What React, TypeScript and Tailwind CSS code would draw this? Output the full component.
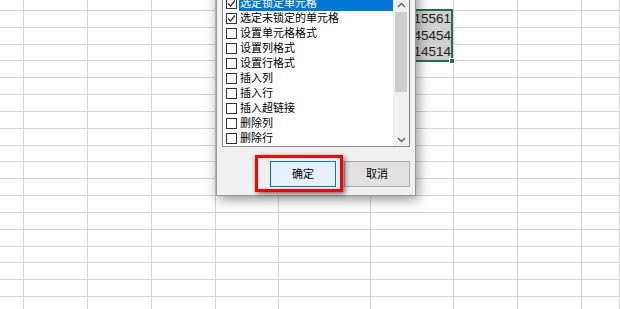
import React from 'react';

const colWidths = [24, 64, 64, 64, 63, 92, 83, 64, 64, 38];
const rowHeights = [11, 17, 17, 16, 17, 17, 17, 17, 17, 16, 17, 17, 17, 17, 17, 16, 17, 17, 13];
const values: Record<number, string> = { 1: '15561', 2: '45454', 3: '14514' };

const items = [
  { label: '选定锁定单元格', checked: true, active: true },
  { label: '选定未锁定的单元格', checked: true },
  { label: '设置单元格格式' },
  { label: '设置列格式' },
  { label: '设置行格式' },
  { label: '插入列' },
  { label: '插入行' },
  { label: '插入超链接' },
  { label: '删除列' },
  { label: '删除行' },
];

function Sheet() {
  return (
    <div className="flex flex-col">
      {rowHeights.map((h, r) => (
        <div key={r} className="flex" style={{ height: h }}>
          {colWidths.map((w, c) => {
            const selected = c === 6 && values[r];
            return (
              <div
                key={c}
                className={`border-r border-b border-[#d4d4d4] flex items-center justify-end pr-[2px] text-[13.5px] text-[#222] ${selected ? 'bg-[#cfcfcf]' : 'bg-white'}`}
                style={{ width: w }}
              >
                {selected ? values[r] : null}
              </div>
            );
          })}
        </div>
      ))}
    </div>
  );
}

function Check({ checked }: { checked?: boolean }) {
  return (
    <div className="w-[11px] h-[11px] border border-[#333] bg-white shrink-0 flex items-center justify-center">
      {checked && (
        <svg width="9" height="9" viewBox="0 0 9 9">
          <path d="M1 4.5 L3.5 7 L8 1.5" fill="none" stroke="#333" strokeWidth="1.2" />
        </svg>
      )}
    </div>
  );
}

function ListBox() {
  return (
    <div className="w-[188px] h-[152px] border border-[#828790] bg-white flex">
      <div className="flex-1 flex flex-col">
        {items.map((it, i) => (
          <div key={i} className="h-[15px] flex items-center pl-[3px]">
            <Check checked={it.checked} />
            <div
              className={`ml-[2px] h-full flex-1 flex items-center pl-[1px] text-[11px] leading-none ${it.active ? 'bg-[#0078d7] text-white' : 'text-black'}`}
            >
              {it.label}
            </div>
          </div>
        ))}
      </div>
      <div className="w-[16px] bg-[#f0f0f0] flex flex-col items-center">
        <svg width="9" height="6" viewBox="0 0 9 6" className="mt-[6px]">
          <path d="M1 5 L4.5 1.5 L8 5" fill="none" stroke="#606060" strokeWidth="1.4" />
        </svg>
        <div className="mt-[4px] w-[12px] h-[80px] bg-[#cdcdcd]" />
        <div className="flex-1" />
        <svg width="9" height="6" viewBox="0 0 9 6" className="mb-[3px]">
          <path d="M1 1 L4.5 4.5 L8 1" fill="none" stroke="#606060" strokeWidth="1.4" />
        </svg>
      </div>
    </div>
  );
}

export default function App() {
  return (
    <div
      className="relative w-[620px] h-[309px] overflow-hidden bg-white"
      style={{ fontFamily: '"Liberation Sans", "Noto Sans CJK SC", sans-serif' }}
    >
      <Sheet />

      {/* selection outline */}
      <div className="absolute left-[368px] top-[9px] w-[85px] h-[53px] border-2 border-[#217346]" />
      <div className="absolute left-[449px] top-[58px] w-[6px] h-[6px] bg-[#217346] border border-white" />

      {/* dialog */}
      <div className="absolute left-[216px] top-[-30px] w-[200px] h-[226px] bg-[#f0f0f0] border border-[#9a9a9a] shadow-[2px_3px_12px_rgba(0,0,0,0.45)] pt-[24px] pl-[5px] flex flex-col">
        <ListBox />
        <div className="mt-[14px] w-[188px] flex justify-end gap-[8px] text-[11px]">
          <button className="w-[66px] h-[26px] border border-[#0078d7] bg-[#e5f1fb] text-black">确定</button>
          <button className="w-[66px] h-[26px] border border-[#adadad] bg-[#e1e1e1] text-black">取消</button>
        </div>
      </div>

      {/* annotation */}
      <div className="absolute left-[255px] top-[155px] w-[88px] h-[37px] border-[3px] border-[#ff0000] shadow-[2px_2px_5px_rgba(0,0,0,0.55)]" />
    </div>
  );
}
